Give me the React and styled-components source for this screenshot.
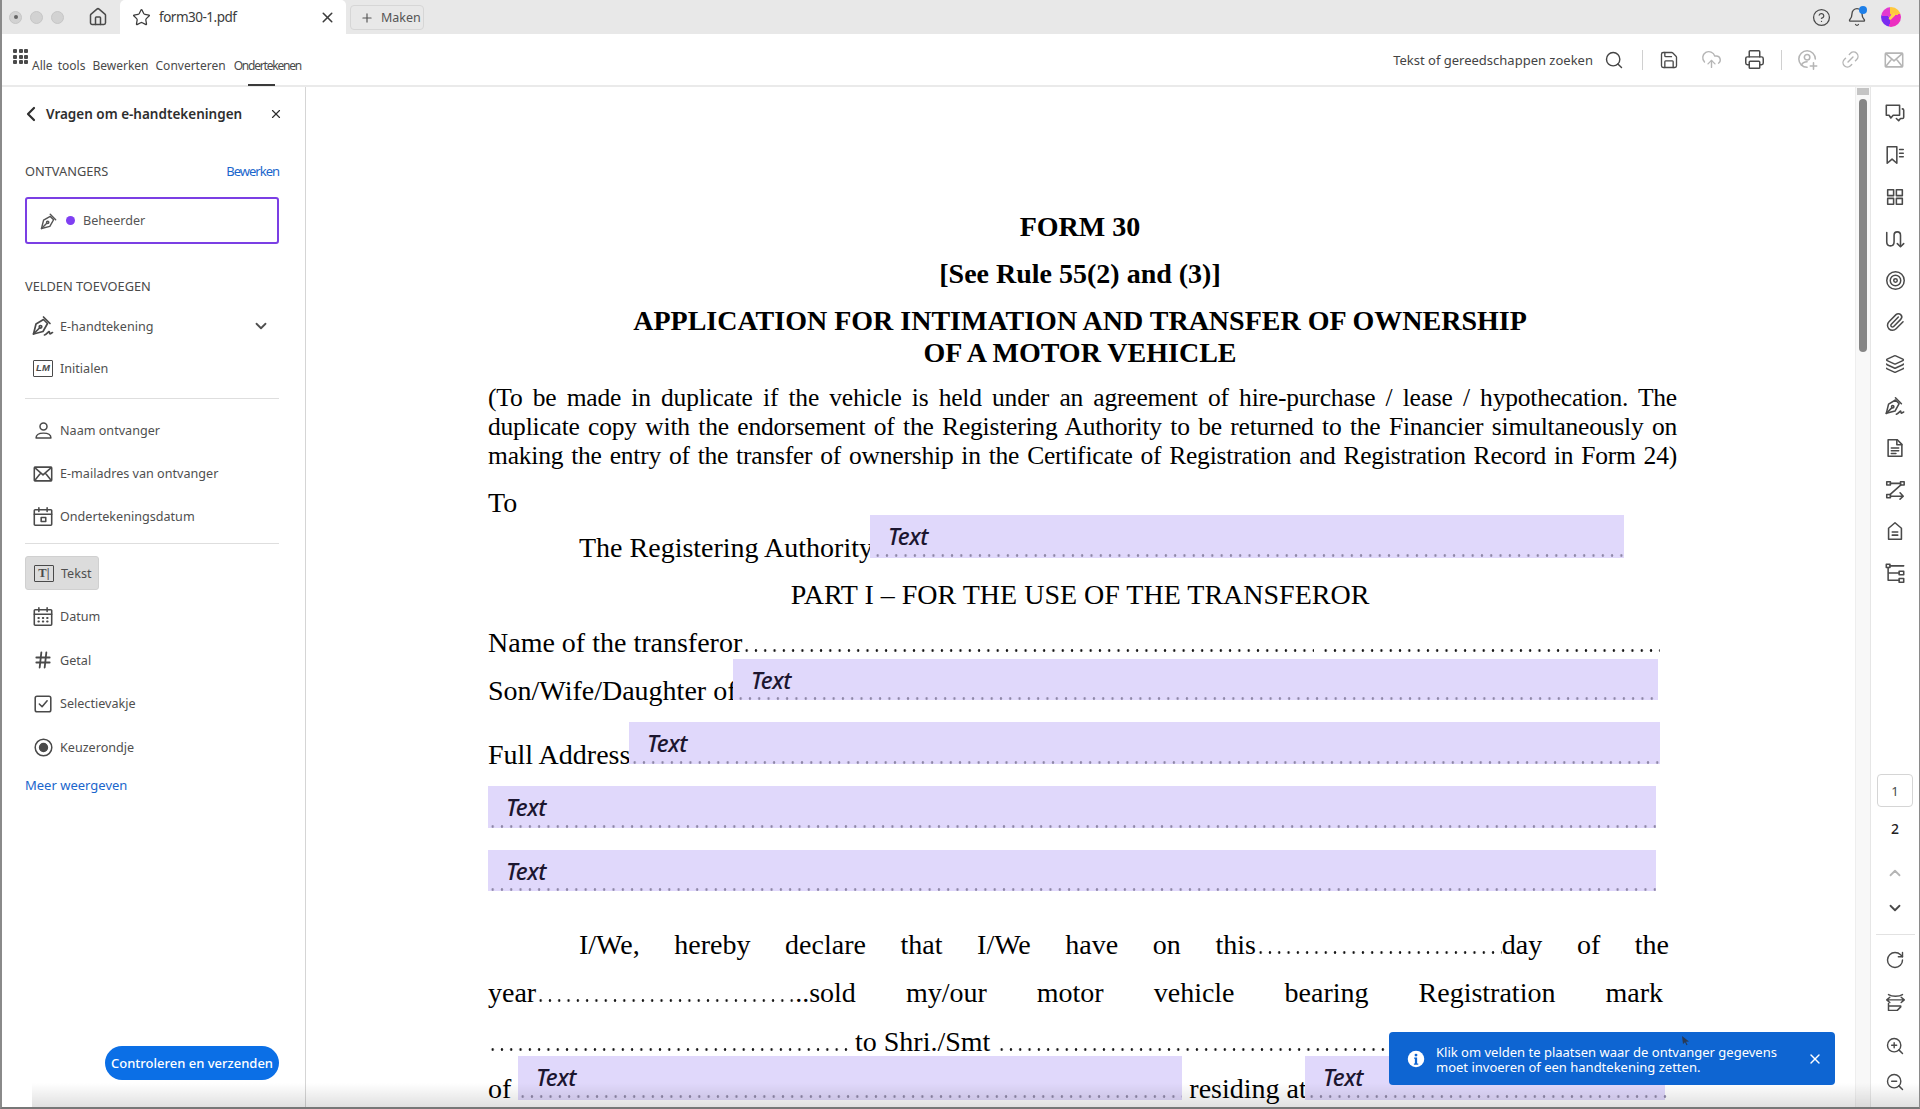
import React from 'react';
import styled, { createGlobalStyle } from 'styled-components';
import {
  Bell, ChevronDown, ChevronLeft, ChevronUp, CircleHelp, CloudUpload, Hash, House, Layers, Link2,
  Paperclip, Plus, Printer, RotateCw, Save, Search, Star, X, ZoomIn, ZoomOut,
} from 'lucide-react';

const Global = createGlobalStyle`
  html, body { margin: 0; padding: 0; background: #fff; overflow: hidden; }
  * { box-sizing: border-box; }
  svg { flex: none; }
  body { font-family: "Noto Sans", "Open Sans", sans-serif; color: #444; }
`;

const Svg = ({ size = 20, children, ...rest }) => (
  <svg width={size} height={size} viewBox="0 0 24 24" fill="none" stroke="currentColor" strokeWidth="1.7" strokeLinecap="round" strokeLinejoin="round" {...rest}>
    {children}
  </svg>
);

const NibIcon = (p) => (
  <Svg {...p}>
    <path d="M3 21 5.500 11 13.500 6.500 17.500 10.500 13 18.500Z" />
    <path d="M3 21 9.300 14.700" />
    <circle cx="10.400" cy="13.600" r="1.400" />
    <path d="M13.500 4 20 10.500" />
  </Svg>
);
const SignIcon = (p) => (
  <Svg {...p}>
    <path d="M2.500 20 5 10 12.500 5.500 16.500 9.500 12 17.500Z" />
    <path d="M2.500 20 8.500 14" />
    <circle cx="9.500" cy="12.800" r="1.300" />
    <path d="M12.500 3 19 9.500" />
    <path d="M13.500 21c2-.5 3.500-3 4.500-3.500.6-.2.2 2.200 1 2.300.7.1 1.500-1 2.500-1.300" />
  </Svg>
);
const UserIcon = (p) => (
  <Svg {...p}>
    <circle cx="12" cy="7.500" r="4" />
    <path d="M3.500 20.500c0-3.600 3-5.500 8.500-5.500s8.500 1.900 8.500 5.500Z" />
  </Svg>
);
const ShareIcon = (p) => (
  <Svg {...p}>
    <path d="M20 11a9 9 0 1 0-9 9" />
    <circle cx="11" cy="9" r="3" />
    <path d="M5 17.500c1-2.500 3.500-3.500 6-3.500M18 15v7M14.500 18.500h7" />
  </Svg>
);
const MailIcon = (p) => (
  <Svg {...p}>
    <rect x="2.500" y="4.500" width="19" height="15" rx="1" />
    <path d="M3 5l9 8 9-8M3 19l6.500-8.200M21 19l-6.500-8.200" />
  </Svg>
);
const SignDateIcon = (p) => (
  <Svg {...p}>
    <rect x="2.500" y="4" width="19" height="17" rx="1" />
    <path d="M2.500 9h19M7.500 2v4M16.500 2v4" />
    <rect x="10" y="12.500" width="5" height="4.500" />
  </Svg>
);
const CalendarIcon = (p) => (
  <Svg {...p}>
    <rect x="2.500" y="4" width="19" height="17" rx="1" />
    <path d="M2.500 9h19M7.500 2v4M16.500 2v4" />
    <path d="M7 13h.5M11.800 13h.5M16.500 13h.5M7 17h.5M11.800 17h.5M16.500 17h.5" strokeWidth="2.200" />
  </Svg>
);
const CheckIcon = (p) => (
  <Svg {...p}>
    <rect x="3.500" y="3.500" width="17" height="17" rx="2" />
    <path d="M8 12l3 3 5.500-6.500" />
  </Svg>
);
const RadioIcon = (p) => (
  <Svg {...p}>
    <circle cx="12" cy="12" r="9.500" />
    <circle cx="12" cy="12" r="4.500" fill="currentColor" />
  </Svg>
);
const CommentsIcon = (p) => (
  <Svg {...p}>
    <path d="M2.500 3.500h14.500v11h-7l-2.500 3-2-3h-3Z" />
    <path d="M20 7.500c1 0 1.500.5 1.500 1.500v7.500c0 1-.5 1.500-1.500 1.500h-2l-2 2.500-2.500-2.500" />
  </Svg>
);
const BookmarksIcon = (p) => (
  <Svg {...p}>
    <path d="M3.500 3h10.500v18l-5.200-4.500L3.500 21Z" />
    <path d="M17 6h4M17 10h4M17 14h4" />
  </Svg>
);
const PagesIcon = (p) => (
  <Svg {...p}>
    <rect x="4" y="4" width="6.500" height="6.500" />
    <rect x="13.500" y="4" width="6.500" height="6.500" />
    <rect x="4" y="13.500" width="6.500" height="6.500" />
    <rect x="13.500" y="13.500" width="6.500" height="6.500" />
  </Svg>
);
const OrganizeIcon = (p) => (
  <Svg {...p}>
    <path d="M3 5v10c0 6 8 6 8 0V8c0-5 7-5 7 0v12" />
    <path d="M14.500 17l3.500 3.500 3.500-3.500" />
  </Svg>
);
const TargetIcon = (p) => (
  <Svg {...p}>
    <circle cx="12" cy="12" r="10" />
    <circle cx="12" cy="12" r="6" />
    <circle cx="12" cy="12" r="2" />
  </Svg>
);
const DocIcon = (p) => (
  <Svg {...p}>
    <path d="M4.500 3h10l5 5v13h-15Z" />
    <path d="M14 3v5.500h5.500M8 12h8M8 15h8M8 18h5" />
  </Svg>
);
const FlowIcon = (p) => (
  <Svg {...p}>
    <rect x="3" y="3" width="4" height="3.500" />
    <rect x="18" y="3" width="4" height="3.500" />
    <rect x="3" y="17" width="4" height="3.500" />
    <path d="M7 4.800h11M18.500 6.500 6.500 17M7 18.800h14M17.500 15l3.500 3.800-3.500 3.200" />
  </Svg>
);
const TagIcon = (p) => (
  <Svg {...p}>
    <path d="M5 9 12 3l7 6v12H5Z" />
    <path d="M9 13h6M9 16.500h6" />
  </Svg>
);
const TreeIcon = (p) => (
  <Svg {...p}>
    <rect x="2.500" y="2.500" width="4" height="3.500" />
    <rect x="16.500" y="10" width="5" height="4" />
    <rect x="16.500" y="18" width="5" height="4" />
    <path d="M6.500 4.200h15M4.500 6v14h12M4.500 12h12" />
  </Svg>
);
const FitIcon = (p) => (
  <Svg {...p}>
    <path d="M4 3c4 2.500 12 2.500 16 0M2 9h20M5.500 6 2 9l3.500 3M18.500 6 22 9l-3.500 3M4 13v8h10l4-4v-1H4" />
  </Svg>
);

const Frame = styled.div`
  position: relative;
  width: 1920px;
  height: 1109px;
  display: flex;
  flex-direction: column;
  overflow: hidden;
  border-left: 2px solid #8a8a8a;
  border-right: 1px solid #8a8a8a;
  border-bottom: 2px solid #777;
`;

const TabBar = styled.div`
  height: 34px;
  flex: none;
  display: flex;
  align-items: stretch;
  background: #e8e8e8;
  color: #4a4a4a;
`;

const WindowDots = styled.div`
  display: flex;
  align-items: center;
  gap: 8px;
  padding-left: 7px;
  width: 81px;
`;

const WindowDot = styled.span`
  width: 13px;
  height: 13px;
  border-radius: 50%;
  background: #d2d2d2;
  border: 1px solid #c6c6c6;
  display: flex;
  align-items: center;
  justify-content: center;
  &::after {
    content: '';
    display: ${(p) => (p.$active ? 'block' : 'none')};
    width: 4px;
    height: 4px;
    border-radius: 50%;
    background: #666;
  }
`;

const HomeButton = styled.div`
  width: 30px;
  margin-right: 7px;
  display: flex;
  align-items: center;
  justify-content: center;
`;

const DocTab = styled.div`
  width: 226px;
  background: #fff;
  border-radius: 5px 5px 0 0;
  display: flex;
  align-items: center;
  padding: 0 10px 0 12px;
  font-size: 13.500px;
  color: #3c3c3c;
  letter-spacing: -0.5px;
  span { margin-left: 8px; flex: 1; }
`;

const NewTab = styled.div`
  margin: 5px 0 4px 4px;
  width: 74px;
  display: flex;
  align-items: center;
  gap: 7px;
  padding-left: 9px;
  border: 1px solid #d6d6d6;
  border-radius: 4px;
  font-size: 12.500px;
  color: #555;
`;

const TabActions = styled.div`
  margin-left: auto;
  display: flex;
  align-items: center;
  padding-right: 18px;
`;

const TabAction = styled.div`
  position: relative;
  width: 35px;
  display: flex;
  justify-content: center;
`;

const BellDot = styled.i`
  position: absolute;
  top: -1px;
  right: 7px;
  width: 8px;
  height: 8px;
  border-radius: 50%;
  background: #1e7fe8;
`;

const Avatar = styled.div`
  position: relative;
  margin-left: 7px;
  width: 20px;
  height: 20px;
  border-radius: 50%;
  background: conic-gradient(from 20deg, #ffc83d 0 14%, #ec2fc0 14% 48%, #7a2bf0 48% 72%, #e43ad0 72% 92%, #ffc83d 92%);
  &::after {
    content: '';
    position: absolute;
    left: 7px;
    top: 8px;
    width: 8px;
    height: 3px;
    border-radius: 2px;
    background: #ffd34d;
    transform: rotate(-45deg);
  }
`;

const ToolBar = styled.div`
  height: 53px;
  flex: none;
  display: flex;
  align-items: center;
  background: #fff;
  border-bottom: 2px solid #eaeaea;
  padding: 0 4px 0 11px;
`;

const GridDots = styled.div`
  display: grid;
  grid-template-columns: repeat(3, 4px);
  grid-auto-rows: 4px;
  gap: 1.500px;
  margin: -6px 4px 0 0;
  i { background: #4a4a4a; border-radius: 1px; }
`;

const NavItem = styled.div`
  position: relative;
  height: 100%;
  display: flex;
  align-items: center;
  padding-top: 12px;
  margin-right: ${(p) => p.$mr || 7}px;
  font-size: 12px;
  color: #4a4a4a;
  word-spacing: ${(p) => p.$ws || 0}px;
  letter-spacing: ${(p) => p.$ls || 0}px;
  &::after {
    content: '';
    display: ${(p) => (p.$active ? 'block' : 'none')};
    position: absolute;
    left: 14px;
    bottom: -1px;
    width: 27px;
    height: 2px;
    background: #3a3a3a;
  }
`;

const ToolSearch = styled.div`
  margin-left: auto;
  display: flex;
  align-items: center;
  gap: 11px;
  font-size: 13px;
  color: #444;
`;

const ToolIcons = styled.div`
  display: flex;
  align-items: center;
`;

const ToolIcon = styled.div`
  width: 43px;
  display: flex;
  justify-content: center;
  color: ${(p) => (p.$off ? '#b5b5b5' : '#4a4a4a')};
`;

const TiltedLink = styled(Link2)`
  transform: rotate(-45deg);
`;

const ToolSep = styled.div`
  width: 1px;
  height: 20px;
  background: #d0d0d0;
  margin: ${(p) => p.$m};
`;

const Body = styled.div`
  flex: 1;
  min-height: 0;
  display: flex;
`;

const Sidebar = styled.aside`
  width: 304px;
  flex: none;
  display: flex;
  flex-direction: column;
  border-right: 1px solid #d5d5d5;
  padding: 0 26px 0 23px;
`;

const PanelHead = styled.div`
  height: 54px;
  flex: none;
  display: flex;
  align-items: center;
  font-size: 13.500px;
  font-weight: 600;
  color: #2e2e2e;
  span { margin-left: 3px; flex: 1; white-space: nowrap; }
`;

const BackChevron = styled(ChevronLeft)`
  margin-left: -6px;
`;

const PanelClose = styled(X)`
  margin-right: -4px;
`;

const SectionRow = styled.div`
  display: flex;
  align-items: center;
  justify-content: space-between;
  height: 24px;
  margin-top: ${(p) => p.$mt}px;
  font-size: 12.800px;
  color: #4a4a4a;
`;

const EditLink = styled.a`
  color: #1a66cc;
  font-size: 13px;
  letter-spacing: -1px;
`;

const RecipientBox = styled.div`
  height: 47px;
  margin-top: 14px;
  display: flex;
  align-items: center;
  padding-left: 12px;
  border: 2px solid #7b3fe4;
  border-radius: 3px;
  font-size: 12.600px;
  color: #555;
`;

const RecipientDot = styled.i`
  width: 9px;
  height: 9px;
  border-radius: 50%;
  background: #7f3ff2;
  margin: 0 8px 0 7px;
`;

const FieldList = styled.div`
  margin-top: 7px;
  display: flex;
  flex-direction: column;
`;

const FieldRow = styled.div`
  display: flex;
  align-items: center;
  height: ${(p) => (p.$active ? 34 : p.$h)}px;
  width: ${(p) => (p.$active ? '74px' : 'auto')};
  margin: ${(p) => (p.$active ? '4px 0 5px' : '0')};
  padding-left: 8px;
  font-size: 12.600px;
  color: #4f4f4f;
  background: ${(p) => (p.$active ? '#dcdcdc' : 'transparent')};
  border: ${(p) => (p.$active ? '1px solid #d0d0d0' : 'none')};
  border-radius: 3px;
  span { margin-left: 7px; flex: 1; white-space: nowrap; }
`;

const RowChevron = styled(ChevronDown)`
  margin-right: 9px;
`;

const FieldIcon = styled.div`
  width: 20px;
  display: flex;
  justify-content: center;
  color: #4a4a4a;
`;

const LetterIcon = styled.div`
  width: 20px;
  height: 17px;
  border: 1.500px solid #4a4a4a;
  border-radius: 1px;
  display: flex;
  align-items: center;
  justify-content: center;
  font-size: ${(p) => (p.$serif ? 12.500 : 9.500)}px;
  line-height: 1;
  color: #4a4a4a;
  font-weight: 700;
  font-style: ${(p) => (p.$italic ? 'italic' : 'normal')};
  font-family: ${(p) => (p.$serif ? '"Liberation Serif", serif' : '"Liberation Sans", sans-serif')};
  letter-spacing: 0.2px;
`;

const Divider = styled.div`
  height: 1px;
  flex: none;
  background: #dedede;
  margin: ${(p) => p.$m};
`;

const MoreLink = styled.a`
  height: 32px;
  flex: none;
  display: flex;
  align-items: center;
  color: #1a66cc;
  font-size: 13px;
`;

const PanelFoot = styled.div`
  margin-top: auto;
  padding-bottom: 27px;
  display: flex;
  justify-content: flex-end;
`;

const SendButton = styled.button`
  width: 174px;
  height: 34px;
  border: none;
  border-radius: 17px;
  background: #0b6fe6;
  color: #fff;
  font: 500 13px "Noto Sans", sans-serif;
  padding: 0;
  white-space: nowrap;
`;

const DocPane = styled.main`
  position: relative;
  flex: 1;
  min-width: 0;
  overflow: hidden;
  background: #fff;
`;

const Page = styled.div`
  width: 1189px;
  margin-left: 182px;
  padding-top: 125px;
  color: #000;
  font-family: "Liberation Serif", "Times New Roman", serif;
  font-size: 28px;
`;

const Line = styled.div`
  position: relative;
  height: 30px;
  line-height: 30px;
  width: ${(p) => p.$w || 1189}px;
  margin-top: ${(p) => p.$mt || 0}px;
  padding-left: ${(p) => p.$indent || 0}px;
  white-space: nowrap;
  text-align: ${(p) => p.$align || 'left'};
  font-weight: ${(p) => (p.$bold ? 700 : 400)};
  font-size: ${(p) => p.$size || 28}px;
  letter-spacing: ${(p) => p.$ls || 0}px;
  ${(p) => p.$justify && 'white-space: normal; text-align: justify; text-align-last: justify;'}
`;

const Leader = styled.span`
  position: relative;
  z-index: 1;
  display: inline-block;
  width: ${(p) => p.$w}px;
  height: 3px;
  background: radial-gradient(circle at center, ${(p) => (p.$muted ? '#8d86a6' : '#111')} 1px, transparent 1.500px) 0 0 / 9.300px 3px repeat-x;
`;

const FormField = styled.div`
  position: absolute;
  left: ${(p) => p.$left}px;
  top: ${(p) => p.$top}px;
  width: ${(p) => p.$width}px;
  height: ${(p) => p.$height}px;
  background: #e0d8fb;
  padding-left: 18px;
  font: italic 500 23px/43px "Noto Sans", sans-serif;
  color: #1c1630;
  letter-spacing: -0.4px;
  text-align: left;
`;

const ScrollTrack = styled.div`
  position: relative;
  width: 16px;
  flex: none;
  background: #f8f8f8;
  border-left: 1px solid #eee;
  border-right: 1px solid #e6e6e6;
`;

const ScrollCap = styled.div`
  height: 7px;
  margin: 1px 1px 0;
  background: #c4c4c4;
`;

const ScrollThumb = styled.div`
  width: 8px;
  height: 253px;
  margin: 4px auto 0;
  border-radius: 4px;
  background: #868686;
`;

const Rail = styled.nav`
  width: 48px;
  flex: none;
  display: flex;
  flex-direction: column;
  align-items: center;
  padding: 5.500px 0 7px;
  color: #4a4a4a;
`;

const RailButton = styled.div`
  height: ${(p) => p.$h || 41.800}px;
  width: 100%;
  display: flex;
  align-items: center;
  justify-content: center;
  flex: none;
  color: ${(p) => (p.$off ? '#b5b5b5' : 'inherit')};
`;

const RailSpacer = styled.div`
  flex: 1;
`;

const PageBox = styled.div`
  width: 36px;
  height: 33px;
  flex: none;
  display: flex;
  align-items: center;
  justify-content: center;
  border: 1px solid #d5d5d5;
  border-radius: 4px;
  font-size: 13px;
`;

const PageNum = styled.div`
  height: 49px;
  flex: none;
  display: flex;
  align-items: center;
  font-size: 14px;
  font-weight: 500;
  color: #222;
  padding-bottom: 7px;
`;

const RailSep = styled.div`
  width: 39px;
  height: 1px;
  flex: none;
  background: #e2e2e2;
  margin: 8px 0 9px;
`;

const Toast = styled.div`
  position: absolute;
  z-index: 2;
  left: 1387px;
  top: 1032px;
  width: 446px;
  height: 53px;
  display: flex;
  align-items: center;
  padding: 0 12px 0 18px;
  background: #0e65d2;
  border-radius: 4px;
  color: #fff;
  font-size: 13px;
  line-height: 15.500px;
  p { margin: 3px 0 0 11px; flex: 1; }
`;

const ToastCursor = styled.svg`
  position: absolute;
  left: 293px;
  top: 4px;
`;

const BottomShade = styled.div`
  position: absolute;
  z-index: 1;
  left: 30px;
  right: 0;
  bottom: 0;
  height: 24px;
  pointer-events: none;
  background: linear-gradient(rgba(0, 0, 0, 0), rgba(0, 0, 0, 0.12));
`;

const fieldItems = [
  { id: 'sign', h: 42, icon: <SignIcon size={24} />, label: 'E-handtekening', chevron: true },
  { id: 'init', h: 42, icon: <LetterIcon $italic>LM</LetterIcon>, label: 'Initialen' },
];
const recipientItems = [
  { id: 'name', h: 43, icon: <UserIcon size={21} />, label: 'Naam ontvanger' },
  { id: 'mail', h: 43, icon: <MailIcon size={22} />, label: 'E-mailadres van ontvanger' },
  { id: 'date', h: 43, icon: <SignDateIcon size={22} />, label: 'Ondertekeningsdatum' },
];
const inputItems = [
  { id: 'text', icon: <LetterIcon $serif>T|</LetterIcon>, label: 'Tekst', active: true },
  { id: 'datum', h: 43.500, icon: <CalendarIcon size={22} />, label: 'Datum' },
  { id: 'num', h: 43.500, icon: <Hash size={20} strokeWidth={2.200} />, label: 'Getal' },
  { id: 'check', h: 43.500, icon: <CheckIcon size={22} />, label: 'Selectievakje' },
  { id: 'radio', h: 43.500, icon: <RadioIcon size={21} />, label: 'Keuzerondje' },
];

const Rows = ({ items }) => items.map((it) => (
  <FieldRow key={it.id} $active={it.active} $h={it.h}>
    <FieldIcon>{it.icon}</FieldIcon>
    <span>{it.label}</span>
    {it.chevron && <RowChevron size={18} strokeWidth={2.400} />}
  </FieldRow>
));

const railIcons = [
  <CommentsIcon size={22} />, <BookmarksIcon size={22} />, <PagesIcon size={22} />, <OrganizeIcon size={22} />,
  <TargetIcon size={21} />, <Paperclip size={20} strokeWidth={1.800} />, <Layers size={20} strokeWidth={1.800} />,
  <SignIcon size={22} />, <DocIcon size={22} />, <FlowIcon size={22} />, <TagIcon size={22} />, <TreeIcon size={22} />,
];

export default function App() {
  return (
    <Frame>
      <Global />
      <TabBar>
        <WindowDots>
          <WindowDot $active />
          <WindowDot />
          <WindowDot />
        </WindowDots>
        <HomeButton><House size={20} strokeWidth={1.800} /></HomeButton>
        <DocTab>
          <Star size={19} strokeWidth={1.600} />
          <span>form30-1.pdf</span>
          <X size={17} strokeWidth={2.200} />
        </DocTab>
        <NewTab><Plus size={14} strokeWidth={2} />Maken</NewTab>
        <TabActions>
          <TabAction><CircleHelp size={19} strokeWidth={1.600} /></TabAction>
          <TabAction><Bell size={20} strokeWidth={1.600} /><BellDot /></TabAction>
          <Avatar />
        </TabActions>
      </TabBar>

      <ToolBar>
        <GridDots>{Array.from({ length: 9 }).map((_, i) => <i key={i} />)}</GridDots>
        <NavItem $ws={2}>Alle tools</NavItem>
        <NavItem>Bewerken</NavItem>
        <NavItem $mr={8}>Converteren</NavItem>
        <NavItem $active $ls={-1.200}>Ondertekenen</NavItem>
        <ToolSearch>
          Tekst of gereedschappen zoeken
          <Search size={20} strokeWidth={1.700} />
        </ToolSearch>
        <ToolSep $m="0 4px 0 18px" />
        <ToolIcons>
          <ToolIcon><Save size={20} strokeWidth={1.600} /></ToolIcon>
          <ToolIcon $off><CloudUpload size={21} strokeWidth={1.600} /></ToolIcon>
          <ToolIcon><Printer size={21} strokeWidth={1.700} /></ToolIcon>
        </ToolIcons>
        <ToolSep $m="0 4px 0 5px" />
        <ToolIcons>
          <ToolIcon $off><ShareIcon size={22} /></ToolIcon>
          <ToolIcon $off><TiltedLink size={21} strokeWidth={1.600} /></ToolIcon>
          <ToolIcon $off><MailIcon size={22} /></ToolIcon>
        </ToolIcons>
      </ToolBar>

      <Body>
        <Sidebar>
          <PanelHead>
            <BackChevron size={24} strokeWidth={2.200} />
            <span>Vragen om e-handtekeningen</span>
            <PanelClose size={14} strokeWidth={2} />
          </PanelHead>
          <SectionRow $mt={18}>
            ONTVANGERS
            <EditLink>Bewerken</EditLink>
          </SectionRow>
          <RecipientBox>
            <NibIcon size={20} />
            <RecipientDot />
            Beheerder
          </RecipientBox>
          <SectionRow $mt={30}>VELDEN TOEVOEGEN</SectionRow>
          <FieldList>
            <Rows items={fieldItems} />
            <Divider $m="9px 0 10px" />
            <Rows items={recipientItems} />
            <Divider $m="5px 0 8px" />
            <Rows items={inputItems} />
          </FieldList>
          <MoreLink>Meer weergeven</MoreLink>
          <PanelFoot><SendButton>Controleren en verzenden</SendButton></PanelFoot>
        </Sidebar>

        <DocPane>
          <Page>
            <Line $bold $align="center" $w={1184}>FORM 30</Line>
            <Line $mt={17} $bold $align="center" $w={1184}>[See Rule 55(2) and (3)]</Line>
            <Line $mt={17} $bold $align="center" $w={1184}>APPLICATION FOR INTIMATION AND TRANSFER OF OWNERSHIP</Line>
            <Line $mt={2} $bold $align="center" $w={1184}>OF A MOTOR VEHICLE</Line>
            <Line $mt={15} $size={25.500} $ls={-0.2} $justify>(To be made in duplicate if the vehicle is held under an agreement of hire-purchase / lease / hypothecation. The</Line>
            <Line $mt={-1} $size={25.500} $ls={-0.2} $justify>duplicate copy with the endorsement of the Registering Authority to be returned to the Financier simultaneously on</Line>
            <Line $mt={-1} $size={25.500} $ls={-0.2} $justify>making the entry of the transfer of ownership in the Certificate of Registration and Registration Record in Form 24)</Line>
            <Line $mt={17}>To</Line>
            <Line $mt={15} $indent={91}>
              The Registering Authority<Leader $w={754} $muted />
              <FormField $left={382} $top={-18} $width={754} $height={43}>Text</FormField>
            </Line>
            <Line $mt={17} $align="center" $w={1184}>PART I – FOR THE USE OF THE TRANSFEROR</Line>
            <Line $mt={18}>Name of the transferor<Leader $w={572} /> <Leader $w={339} /></Line>
            <Line $mt={18}>
              Son/Wife/Daughter of<Leader $w={922} $muted />
              <FormField $left={245} $top={-17} $width={925} $height={41}>Text</FormField>
            </Line>
            <Line $mt={34}>
              Full Address<Leader $w={1031} $muted />
              <FormField $left={141} $top={-18} $width={1031} $height={42}>Text</FormField>
            </Line>
            <Line $mt={34}>
              <Leader $w={1168} $muted />
              <FormField $left={0} $top={-18} $width={1168} $height={42}>Text</FormField>
            </Line>
            <Line $mt={33}>
              <Leader $w={1168} $muted />
              <FormField $left={0} $top={-17} $width={1168} $height={41}>Text</FormField>
            </Line>
            <Line $mt={33} $w={1181} $indent={91} $justify>
              I/We, hereby declare that I/We have on this<Leader $w={246} />day of the
            </Line>
            <Line $mt={18} $w={1175} $justify>year<Leader $w={259} />..sold my/our motor vehicle bearing Registration mark</Line>
            <Line $mt={19}><Leader $w={360} /> to Shri./Smt <Leader $w={520} /></Line>
            <Line $mt={17}>
              of <Leader $w={664} $muted /> residing at<Leader $w={360} $muted />
              <FormField $left={30} $top={-18} $width={664} $height={44}>Text</FormField>
              <FormField $left={817} $top={-18} $width={360} $height={44}>Text</FormField>
            </Line>
          </Page>
        </DocPane>

        <ScrollTrack>
          <ScrollCap />
          <ScrollThumb />
        </ScrollTrack>

        <Rail>
          {railIcons.map((icon, i) => <RailButton key={i}>{icon}</RailButton>)}
          <RailSpacer />
          <PageBox>1</PageBox>
          <PageNum>2</PageNum>
          <RailButton $h={34} $off><ChevronUp size={18} strokeWidth={2.400} /></RailButton>
          <RailButton $h={36}><ChevronDown size={18} strokeWidth={2.400} /></RailButton>
          <RailSep />
          <RailButton $h={32}><RotateCw size={20} strokeWidth={1.700} /></RailButton>
          <RailButton $h={52}><FitIcon size={21} /></RailButton>
          <RailButton $h={36}><ZoomIn size={20} strokeWidth={1.700} /></RailButton>
          <RailButton $h={36}><ZoomOut size={20} strokeWidth={1.700} /></RailButton>
        </Rail>
      </Body>

      <Toast>
        <Svg size={18} stroke="none">
          <circle cx="12" cy="12" r="11" fill="#fff" />
          <circle cx="12" cy="6.800" r="1.900" fill="#0e65d2" />
          <path d="M9.500 10h4v8h1.500v1.800H9.200V18h1.300v-6.200H9.500Z" fill="#0e65d2" />
        </Svg>
        <p>Klik om velden te plaatsen waar de ontvanger gegevens<br />moet invoeren of een handtekening zetten.</p>
        <X size={16} strokeWidth={2} />
        <ToastCursor width="8" height="10" viewBox="0 0 8 10"><path d="M0 0l7 5.500-3 .3 1.500 3-1 .5-1.500-3L1 8Z" fill="#2a3a55" /></ToastCursor>
      </Toast>
      <BottomShade />
    </Frame>
  );
}
